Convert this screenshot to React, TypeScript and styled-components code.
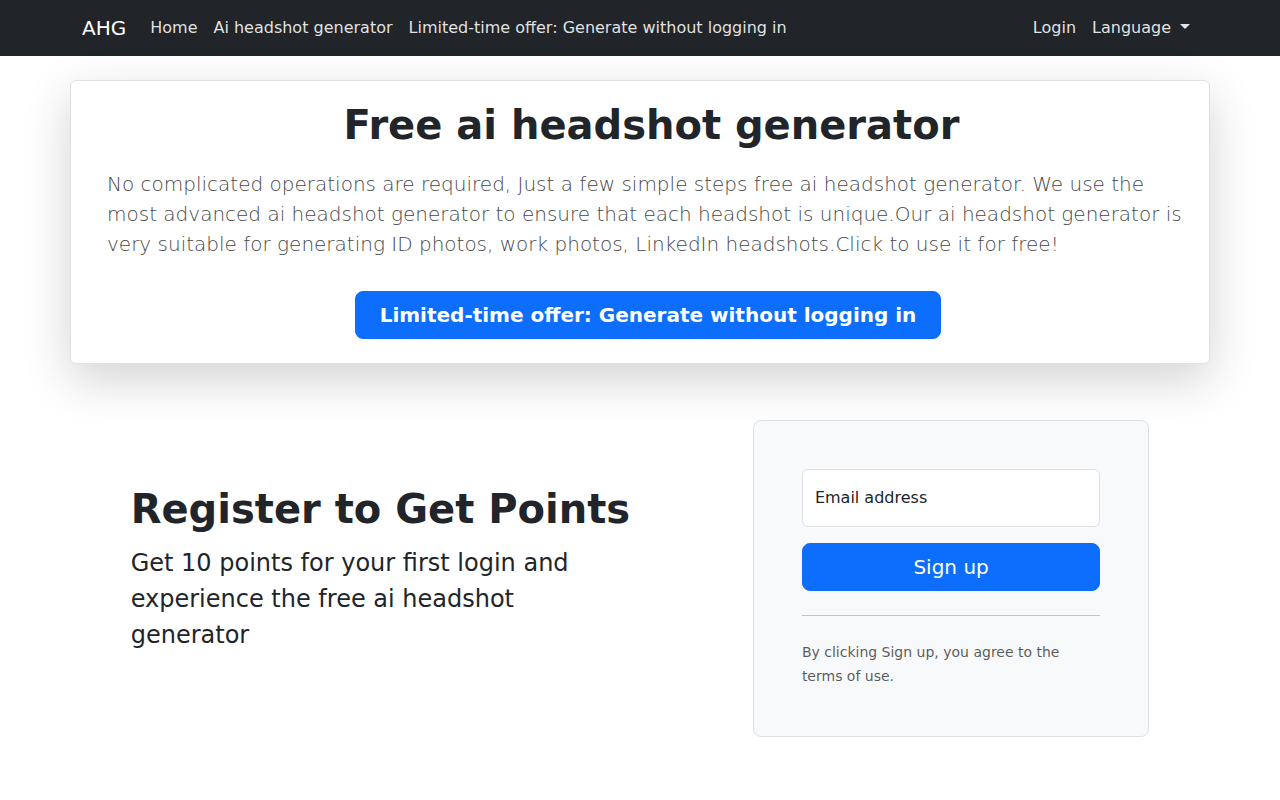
import styled, { createGlobalStyle } from 'styled-components';

const GlobalStyle = createGlobalStyle`
  *, *::before, *::after { box-sizing: border-box; }
  body {
    margin: 0;
    font-family: "DejaVu Sans", "Liberation Sans", sans-serif;
    font-size: 16px;
    line-height: 1.5;
    color: #212529;
    background: #fff;
  }
  h1, p { margin: 0; }
`;

const Navbar = styled.nav`
  background: #212529;
  padding: 8px 0;
`;

const NavInner = styled.div`
  max-width: 1140px;
  margin: 0 auto;
  padding: 0 12px;
  display: flex;
  align-items: center;
`;

const Brand = styled.a`
  font-size: 20px;
  line-height: 30px;
  padding: 5px 0;
  margin-right: 16px;
  color: #fff;
  text-decoration: none;
`;

const NavList = styled.div<{ $end?: boolean }>`
  display: flex;
  margin-left: ${(p) => (p.$end ? 'auto' : '0')};
`;

const NavLink = styled.a`
  display: block;
  padding: 8px;
  line-height: 24px;
  color: rgba(255, 255, 255, 0.88);
  text-decoration: none;
  white-space: nowrap;
`;

const Caret = styled.span`
  display: inline-block;
  margin-left: 9px;
  border-top: 5px solid;
  border-right: 5px solid transparent;
  border-left: 5px solid transparent;
  border-bottom: 0;
  vertical-align: 4px;
`;

const HeroCard = styled.section`
  max-width: 1140px;
  margin: 24px auto 0;
  border: 1px solid #dee2e6;
  border-radius: 6px;
  background: #fff;
  box-shadow: 0 1rem 3rem rgba(0, 0, 0, 0.175);
  padding: 20px 20px 24px 36px;
  display: flex;
  flex-direction: column;
  align-items: center;
`;

const HeroTitle = styled.h1`
  font-size: 40px;
  font-weight: 700;
  line-height: 1.2;
  text-align: center;
  padding-left: 7px;
  margin-bottom: 20px;
`;

const Lead = styled.p`
  align-self: stretch;
  font-size: 20px;
  font-weight: 300;
  line-height: 30px;
  color: #45484b;
  margin-bottom: 32px;
`;

const OfferButton = styled.button`
  font-family: inherit;
  font-size: 20px;
  font-weight: 700;
  line-height: 30px;
  padding: 8px 24px;
  color: #fff;
  background: #0d6efd;
  border: 1px solid #0d6efd;
  border-radius: 8px;
  cursor: pointer;
`;

const SignupSection = styled.div`
  width: 83.3333%;
  margin: 0 auto;
  padding: 0 24px;
`;

const Row = styled.div`
  display: grid;
  grid-template-columns: 7fr 5fr;
  align-items: center;
  margin: 0 -24px;
  padding-top: 56px;
`;

const Col = styled.div`
  padding: 0 24px;
`;

const Title = styled.h1`
  font-size: 40px;
  font-weight: 700;
  line-height: 1;
  margin-bottom: 16px;
`;

const Sub = styled.p`
  width: 83.3333%;
  font-size: 24px;
  line-height: 36px;
  margin-bottom: 16px;
`;

const FormBox = styled.form`
  padding: 48px;
  border: 1px solid #dee2e6;
  border-radius: 8px;
  background: #f8f9fa;
`;

const Floating = styled.div`
  position: relative;
  margin-bottom: 16px;
`;

const Input = styled.input`
  display: block;
  width: 100%;
  height: 58px;
  padding: 16px 12px;
  font-family: inherit;
  font-size: 16px;
  border: 1px solid #dee2e6;
  border-radius: 6px;
  background: #fff;
  color: #212529;
  &::placeholder { color: transparent; }
`;

const FloatLabel = styled.label`
  position: absolute;
  top: 0;
  left: 0;
  padding: 16px 12px;
  border: 1px solid transparent;
  line-height: 24px;
  color: #212529;
  pointer-events: none;
`;

const SignupButton = styled.button`
  display: block;
  width: 100%;
  font-family: inherit;
  font-size: 20px;
  line-height: 30px;
  padding: 8px 16px;
  color: #fff;
  background: #0d6efd;
  border: 1px solid #0d6efd;
  border-radius: 8px;
  cursor: pointer;
`;

const Rule = styled.hr`
  margin: 24px 0;
  border: 0;
  border-top: 1px solid #212529;
  opacity: 0.25;
`;

const Terms = styled.small`
  font-size: 14px;
  color: rgba(33, 37, 41, 0.75);
`;

export default function App() {
  return (
    <>
      <GlobalStyle />
      <Navbar>
        <NavInner>
          <Brand href="#">AHG</Brand>
          <NavList>
            <NavLink href="#">Home</NavLink>
            <NavLink href="#">Ai headshot generator</NavLink>
            <NavLink href="#">Limited-time offer: Generate without logging in</NavLink>
          </NavList>
          <NavList $end>
            <NavLink href="#">Login</NavLink>
            <NavLink href="#">
              Language
              <Caret />
            </NavLink>
          </NavList>
        </NavInner>
      </Navbar>

      <HeroCard>
        <HeroTitle>Free ai headshot generator</HeroTitle>
        <Lead>
          No complicated operations are required, Just a few simple steps free ai headshot
          generator. We use the most advanced ai headshot generator to ensure that each headshot
          is unique.Our ai headshot generator is very suitable for generating ID photos, work
          photos, LinkedIn headshots.Click to use it for free!
        </Lead>
        <OfferButton type="button">Limited-time offer: Generate without logging in</OfferButton>
      </HeroCard>

      <SignupSection>
        <Row>
          <Col>
            <Title>Register to Get Points</Title>
            <Sub>Get 10 points for your first login and experience the free ai headshot generator</Sub>
          </Col>
          <Col>
            <FormBox onSubmit={(e) => e.preventDefault()}>
              <Floating>
                <Input type="email" id="email" placeholder="name@example.com" />
                <FloatLabel htmlFor="email">Email address</FloatLabel>
              </Floating>
              <SignupButton type="submit">Sign up</SignupButton>
              <Rule />
              <Terms>By clicking Sign up, you agree to the terms of use.</Terms>
            </FormBox>
          </Col>
        </Row>
      </SignupSection>
    </>
  );
}
